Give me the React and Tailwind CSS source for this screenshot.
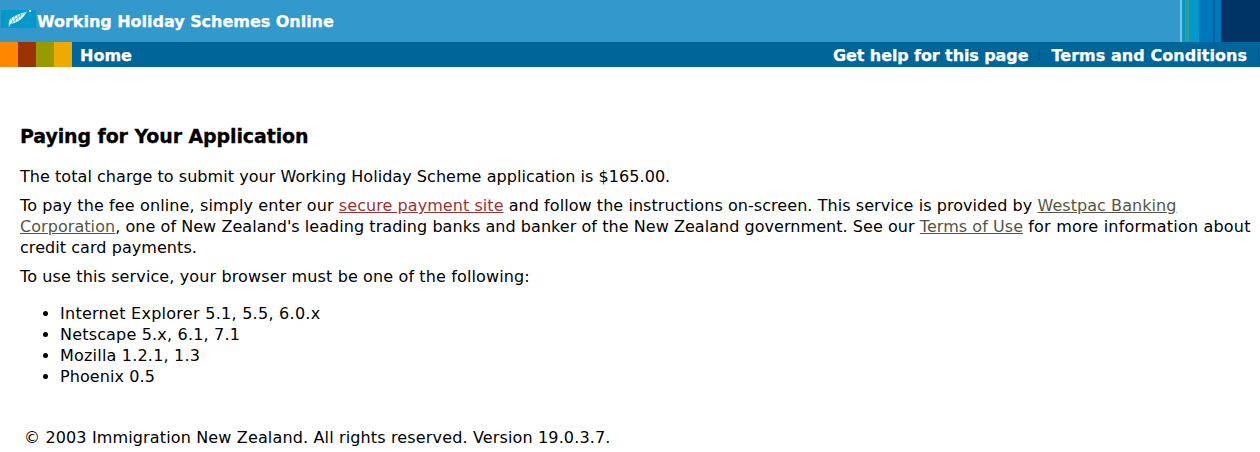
export default function App() {
  return (
    <div className="w-[1260px] h-[452px] overflow-hidden bg-white text-black font-['DejaVu_Sans',sans-serif] text-[16px] leading-[21px]">
      <header className="h-[42px] bg-[#3399cc] flex items-start">
        <div className="mt-[10px] ml-[1px] w-[35px] h-[18px] bg-[#0099cc]">
          <svg width="35" height="18" viewBox="0 0 35 18" fill="none">
            <path d="M8 17.500 C7.500 13 8 9.500 11 7.500 C15 5 20 3.500 26 1.500 C24 5 21 9 16.500 11.500 C14 13 11 13.500 9 14.500 Z" fill="#ffffff" />
            <path d="M9 16 C11 12 16 7 25 2.500" stroke="#0099cc" strokeWidth="0.6" />
            <path d="M10.500 7.500 L11.500 12.500 M13.500 6 L14.500 11.500 M16.500 5 L17.500 9.500 M19.500 4 L20 7.500" stroke="#0099cc" strokeWidth="0.7" />
            <rect x="28" y="0" width="2" height="2" fill="#ffffff" />
          </svg>
        </div>
        <h1 className="ml-[1px] mt-[11px] text-[16px] leading-[21px] font-bold text-white whitespace-nowrap tracking-[-0.03px] [-webkit-text-stroke:0.25px_#ffffff]">Working Holiday Schemes Online</h1>
        <div className="ml-auto flex h-[42px]">
          <div className="w-[2px] bg-[#80c0e0]" />
          <div className="w-[3px] bg-[#0099cc]" />
          <div className="w-[4px] bg-[#339999]" />
          <div className="w-[10px] bg-[#0099cc]" />
          <div className="w-[14px] bg-[#0077bb]" />
          <div className="w-[2px] bg-[#006699]" />
          <div className="w-[6px] bg-[#0077bb]" />
          <div className="w-[39px] bg-[#003366]" />
        </div>
      </header>
      <nav className="h-[25px] bg-[#006699] flex items-center">
        <div className="flex h-full">
          <div className="w-[18px] bg-[#ff8800]" />
          <div className="w-[18px] bg-[#993300]" />
          <div className="w-[18px] bg-[#999900]" />
          <div className="w-[18px] bg-[#eeaa00]" />
        </div>
        <a className="ml-[8px] pt-[2px] font-bold text-white [-webkit-text-stroke:0.25px_#ffffff]">Home</a>
        <a className="ml-auto pt-[2px] font-bold text-white whitespace-nowrap tracking-[-0.1px] [-webkit-text-stroke:0.25px_#ffffff]">Get help for this page</a>
        <span className="ml-[11px] h-[11px] border-l border-dotted border-[#333333]" />
        <a className="ml-[11px] pt-[2px] font-bold text-white whitespace-nowrap tracking-[0.05px] [-webkit-text-stroke:0.25px_#ffffff]">Terms and Conditions</a>
        <span className="ml-[11px] mr-[1px] h-[11px] border-l border-dotted border-[#333333]" />
      </nav>
      <main className="pl-[20px] pt-[58px]">
        <h2 className="text-[19px] leading-[23px] font-bold tracking-[-0.11px] [-webkit-text-stroke:0.3px_#000000]">Paying for Your Application</h2>
        <p className="mt-[18px] tracking-[0.05px]">The total charge to submit your Working Holiday Scheme application is $165.00.</p>
        <p className="mt-[8px] w-[1240px] tracking-[0.06px]">
          <span className="tracking-[0.12px]">To pay the fee online, simply enter our </span><a className="underline text-[#993333]">secure payment site</a> and follow the instructions on-screen. This service is provided by <a className="underline text-[#555544]">Westpac Banking Corporation</a>, <span className="tracking-[0.05px]">one of New Zealand's leading trading banks and banker of the New Zealand government. See our </span><a className="underline text-[#555544]">Terms of Use</a> <span className="tracking-[0.2px]">for more information about</span> credit card payments.
        </p>
        <p className="mt-[8px] tracking-[0.127px]">To use this service, your browser must be one of the following:</p>
        <ul className="mt-[16px] pl-[40px] list-disc">
          <li className="tracking-[0.27px]">Internet Explorer 5.1, 5.5, 6.0.x</li>
          <li className="tracking-[0.18px]">Netscape 5.x, 6.1, 7.1</li>
          <li className="tracking-[0.2px]">Mozilla 1.2.1, 1.3</li>
          <li className="tracking-[0.09px]">Phoenix 0.5</li>
        </ul>
        <p className="mt-[40px] pl-[4px] tracking-[0.145px]">© 2003 Immigration New Zealand. All rights reserved. Version 19.0.3.7.</p>
      </main>
    </div>
  );
}
